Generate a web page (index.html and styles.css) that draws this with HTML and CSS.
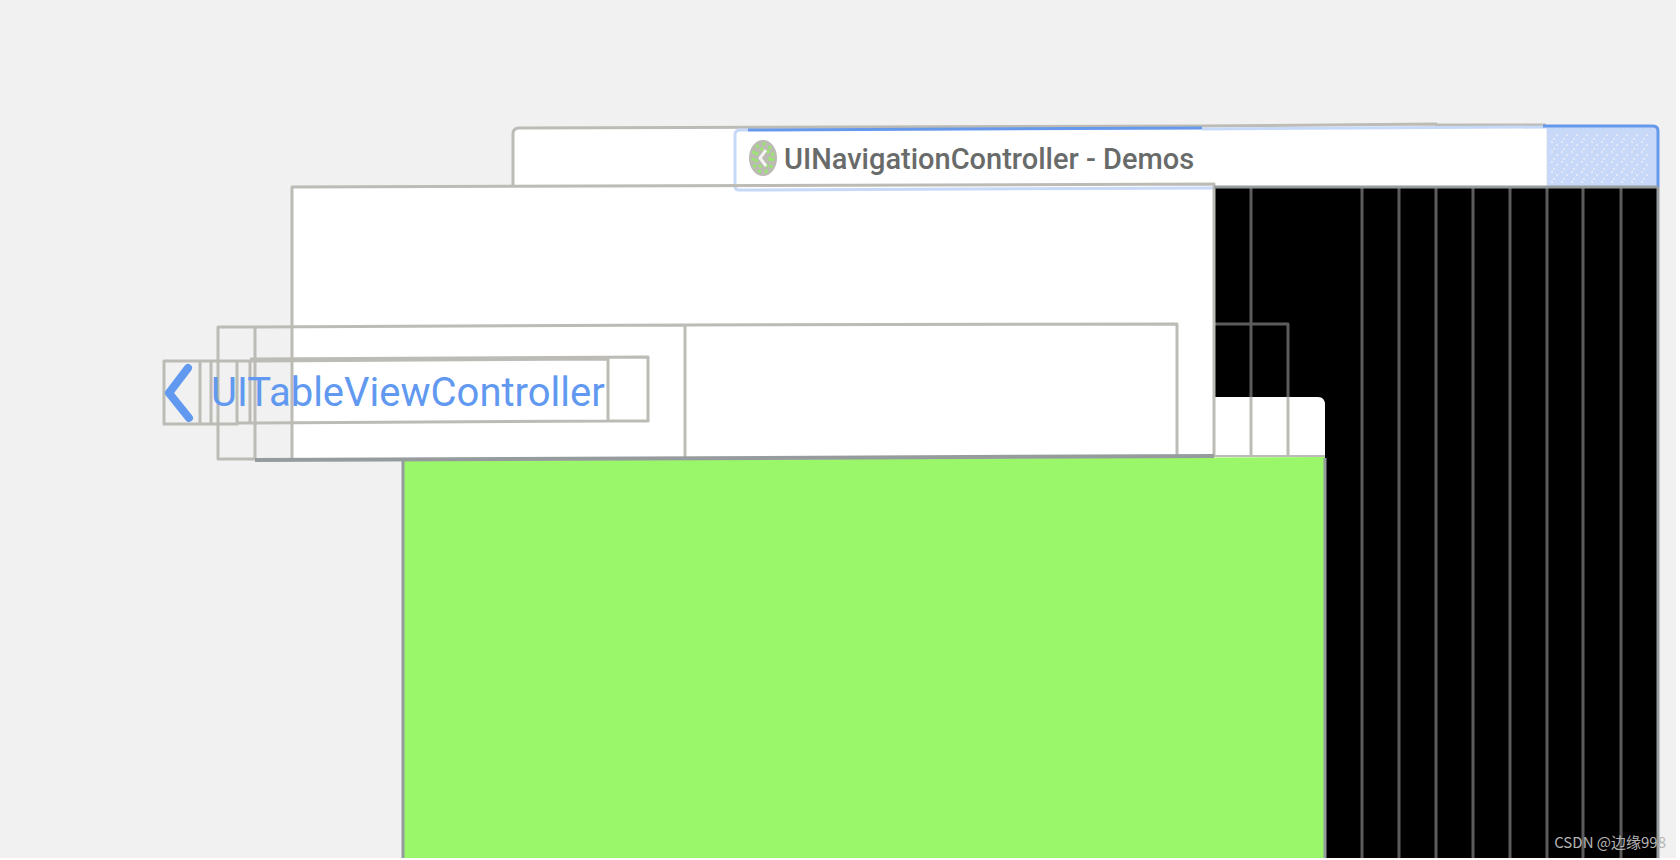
FILE: index.html
```
<!DOCTYPE html>
<html lang="en">
<head>
  <meta charset="UTF-8">
  <meta name="viewport" content="width=device-width, initial-scale=1.0">
  <title>UINavigationController - Demos</title>
  <link rel="stylesheet" href="styles.css">
</head>
<body>
  <main class="canvas">
    <svg class="wireframe" viewBox="0 0 1676 858" aria-hidden="true">
      <!-- window layers -->
      <path fill="#000" d="M1214 187H1658V860H1214z"/>
      <path fill="#fff" d="M513 186V134Q513 128 519 128L1546 126V186z"/>
      <path fill="#c7d8f8" d="M1547 186V132Q1547 127 1543 126H1653Q1658 126 1658 131V187z"/>
      <path fill="url(#dots)" d="M1551 134H1650V184H1551z"/>
      <path fill="#fff" d="M292 187L1214 185V458H292z"/>
      <path fill="#fff" d="M1214 397H1318Q1325 397 1325 405V458H1214z"/>
      <path fill="#9af76a" d="M403 461L1325 457V860H403z"/>

      <!-- columns behind the window -->
      <path class="dark-line" d="M1251 187V397M1362 187V860M1399 187V860M1436 187V860M1473 187V860M1510 187V860M1547 187V860M1583 187V860M1621 187V860M1214 324H1288V397"/>
      <path class="edge" d="M1658 187V860M403 461V860M1325 458V860"/>

      <!-- title bar -->
      <path class="line" d="M513 186V134Q513 128 519 128L1202 126L1436 124V125H1546"/>
      <path class="pale" d="M748 130H740Q735 130 735 135V186Q735 190 739 190L1214 188M1202 129L1546 127"/>
      <path class="blue" d="M748 130L1202 128M1543 126H1653Q1658 126 1658 131V187"/>
      <path class="line" d="M292 460V187L1214 184V456"/>
      <path class="edge" d="M1214 187L1658 187"/>

      <!-- navigation bar -->
      <path class="line" d="M255 459H218V327L255 327M255 460V327L685 325V457M685 325L1177 324V456M1251 397V456M1288 397V456"/>
      <path class="edge bar-bottom" d="M255 460L1214 456"/>
      <path class="line thin" d="M1214 456H1325"/>

      <!-- back button -->
      <path class="line" d="M164 361H237V424H164zM200 361V424M211 361V424M237 361L608 359V421L237 423M250 361V423M250 359L648 357V421L608 421"/>
      <path class="chevron" d="M188 368L169 393L189 418"/>

      <!-- tab icon -->
      <ellipse cx="763" cy="158" rx="14" ry="18" fill="#bbbbb3"/>
      <ellipse class="green-dots" cx="763" cy="158" rx="10" ry="14"/>
      <ellipse class="green-dots" cx="763" cy="158" rx="7" ry="9"/>
      <path fill="none" stroke="#f4f4f2" stroke-width="3" d="M766 150L760 158L766 166"/>
      <defs>
        <pattern id="dots" width="10" height="10" patternUnits="userSpaceOnUse">
          <path fill="#e2e8f4" d="M1 1h2v2h-2zM6 4h2v2h-2zM3 8h2v2h-2z"/>
        </pattern>
      </defs>
    </svg>
    <h1 class="title">UINavigationController - Demos</h1>
    <button class="back" type="button">UITableViewController</button>
    <span class="watermark">CSDN @边缘998</span>
  </main>
</body>
</html>
```
FILE: styles.css
```
body {
  margin: 0;
  background: #fff;
  overflow: hidden;
}
.canvas {
  position: relative;
  box-sizing: border-box;
  min-height: 100vh;
  border-right: 4px solid #fff;
  border-bottom: 2px solid #fff;
  background: #f1f1f1;
}
.wireframe {
  display: block;
  width: 100%;
}
.wireframe path {
  stroke-linejoin: round;
}
.line, .dark-line, .edge, .pale, .blue, .chevron {
  fill: none;
  stroke-width: 3px;
}
.line {
  stroke: #bcbbb5;
}
.thin {
  stroke-width: 2px;
}
.dark-line {
  stroke: #5c5c5c;
}
.edge {
  stroke: #969c9e;
}
.bar-bottom {
  stroke-width: 4px;
}
.pale {
  stroke: #c7d9f9;
}
.blue {
  stroke: #6699ec;
}
.chevron {
  stroke: #6199f0;
  stroke-width: 8px;
  stroke-linecap: round;
}
.green-dots {
  fill: none;
  stroke: #98e66d;
  stroke-width: 3px;
  stroke-dasharray: 3 4;
}
.title, .back {
  position: absolute;
  margin: 0;
  white-space: nowrap;
  font-family: Roboto, "Liberation Sans", sans-serif;
}
.title {
  left: 784px;
  top: 139px;
  color: #686b69;
  font-size: 29px;
  font-weight: 500;
  line-height: 40px;
}
.back {
  left: 211px;
  top: 363px;
  padding: 0;
  border: none;
  background: none;
  color: #6199f0;
  font-size: 40px;
  line-height: 60px;
}
.watermark {
  position: absolute;
  right: 10px;
  bottom: 6px;
  color: #b4b4b4;
  font-family: "Noto Sans CJK SC", sans-serif;
  font-size: 15px;
  line-height: 20px;
}
```
